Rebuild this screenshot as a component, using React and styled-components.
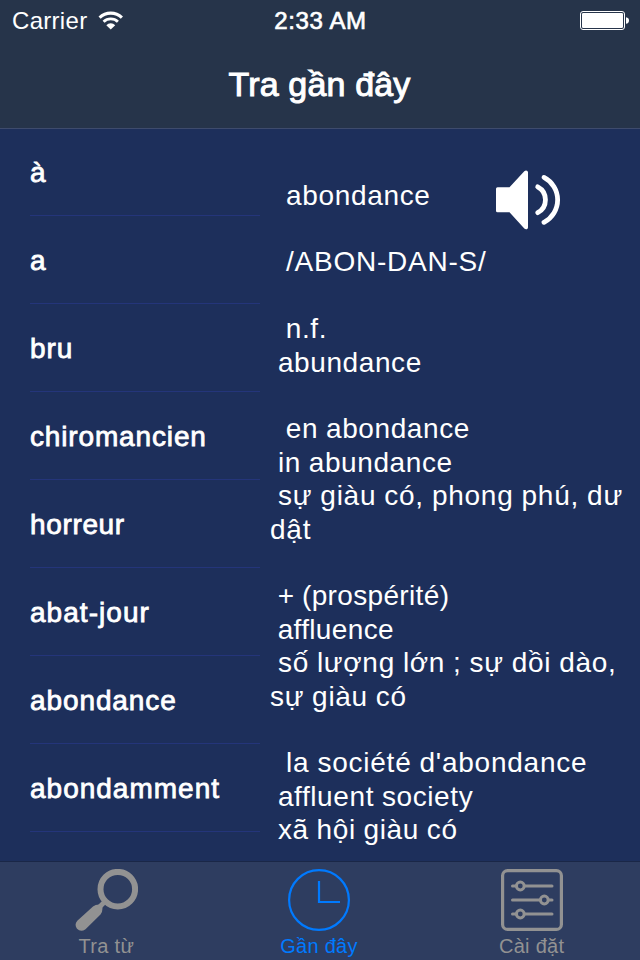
import { useState } from "react";
import styled, { createGlobalStyle } from "styled-components";

const GlobalStyle = createGlobalStyle`
  * {
    box-sizing: border-box;
  }
  body {
    margin: 0;
    font-family: "Liberation Sans", Arial, sans-serif;
    background: #1d2f5b;
    color: #fff;
  }
`;

const Screen = styled.div`
  width: 640px;
  height: 960px;
  display: flex;
  flex-direction: column;
  overflow: hidden;
  background: #1d2f5b;
`;

const Header = styled.header`
  height: 128px;
  flex: none;
  position: relative;
  background: #26344a;
  box-shadow: 0 1px 0 #3e4b6d;
`;

const StatusBar = styled.div`
  height: 40px;
  display: grid;
  grid-template-columns: 1fr auto 1fr;
  align-items: center;
  padding: 2px 11px 0 12px;
  font-size: 24px;
  line-height: 28px;
  letter-spacing: 0.3px;
`;

const Carrier = styled.div`
  display: flex;
  align-items: center;
  gap: 11px;

  svg {
    margin-top: -2px;
  }
`;

const Time = styled.div`
  letter-spacing: 0.6px;
  -webkit-text-stroke: 0.7px #fff;
`;

const Battery = styled.div`
  display: flex;
  justify-content: flex-end;
  margin-top: -2px;
`;

const Title = styled.h1`
  margin: 0;
  height: 88px;
  line-height: 88px;
  text-align: center;
  font-size: 34px;
  font-weight: 400;
  letter-spacing: 0.15px;
  text-indent: -1px;
  -webkit-text-stroke: 1px #fff;
`;

const Content = styled.main`
  flex: 1;
  min-height: 0;
  display: flex;
`;

const WordList = styled.ul`
  width: 260px;
  flex: none;
  margin: 0;
  padding: 0 0 0 30px;
  list-style: none;
`;

const Word = styled.li`
  height: 88px;
  border-bottom: 1px solid #24357a;
  font-size: 28px;
  line-height: 90px;
  letter-spacing: ${(props) => props.$spacing || "0.9px"};
  -webkit-text-stroke: 0.8px #fff;
  cursor: pointer;
`;

const Detail = styled.section`
  position: relative;
  flex: 1;
  padding: 50.65px 0 0 10px;
`;

const Line = styled.div`
  height: 33.4px;
  font-size: 28px;
  line-height: 33.4px;
  letter-spacing: ${(props) => props.$spacing || "0.6px"};
  word-spacing: -0.5px;
  white-space: pre;
`;

const SpeakButton = styled.button`
  position: absolute;
  top: 42px;
  left: 236px;
  padding: 0;
  border: 0;
  background: none;
  line-height: 0;
`;

const TabBar = styled.nav`
  height: 98px;
  flex: none;
  position: relative;
  display: grid;
  grid-template-columns: repeat(3, 1fr);
  padding-right: 2px;
  background: #2e3d60;
  box-shadow: 0 -1px 0 #1a2747;
`;

const Tab = styled.button`
  display: flex;
  flex-direction: column;
  align-items: center;
  padding: 7px 0 0;
  border: 0;
  background: none;
  font-family: inherit;
  font-size: 20px;
  line-height: 24px;
  letter-spacing: 0.3px;
  color: ${(props) => (props.$active ? "#007aff" : "#929292")};

  span {
    margin-top: 3px;
  }
`;

const words = [
  { text: "à" },
  { text: "a" },
  { text: "bru" },
  { text: "chiromancien", spacing: "0.85px" },
  { text: "horreur", spacing: "0.65px" },
  { text: "abat-jour", spacing: "1.05px" },
  { text: "abondance" },
  { text: "abondamment", spacing: "1px" },
];

const lines = [
  { text: "  abondance", spacing: "0.68px" },
  { text: "" },
  { text: "  /ABON-DAN-S/", spacing: "0.75px" },
  { text: "" },
  { text: "  n.f." },
  { text: " abundance" },
  { text: "" },
  { text: "  en abondance" },
  { text: " in abundance" },
  { text: " sự giàu có, phong phú, dư", spacing: "0.75px" },
  { text: "dật", spacing: "0.8px" },
  { text: "" },
  { text: " + (prospérité)", spacing: "0.35px" },
  { text: " affluence", spacing: "0.35px" },
  { text: " số lượng lớn ; sự dồi dào,", spacing: "0.7px" },
  { text: "sự giàu có", spacing: "0.7px" },
  { text: "" },
  { text: "  la société d'abondance", spacing: "0.76px" },
  { text: " affluent society" },
  { text: " xã hội giàu có" },
];

const WifiIcon = () => (
  <svg width="26" height="19" viewBox="0 0 26 19" fill="none" stroke="#fff">
    <path d="M1.600 6.600a16 16 0 0 1 22.300 0" strokeWidth="3.100" />
    <path d="M5.600 10.700a10.400 10.400 0 0 1 14.300 0" strokeWidth="2.900" />
    <path d="M12.750 18.600L8.300 14.200a6.300 6.300 0 0 1 8.900 0z" fill="#fff" stroke="none" />
  </svg>
);

const BatteryIcon = () => (
  <svg width="49" height="19" viewBox="0 0 49 19">
    <rect x="0.500" y="0.500" width="44" height="18" rx="2.500" fill="none" stroke="#fff" />
    <rect x="2" y="2" width="41" height="15" rx="1.200" fill="#fff" />
    <path d="M46 6.200c2 .3 3 1.500 3 3.300s-1 3-3 3.300z" fill="#fff" />
  </svg>
);

const SpeakerIcon = () => (
  <svg width="66" height="60" viewBox="0 0 66 60">
    <path
      d="M1.500 17.300H13.500L28.300 1.200C29.800-.3 32 .4 32 2.600V57.200C32 59.400 29.800 60 28.300 58.600L13.500 42.300H1.500Q0 42.300 0 40.800V18.800Q0 17.300 1.500 17.300z"
      fill="#fff"
    />
    <path
      d="M41.700 16.800A14.700 14.700 0 0 1 41.700 42.700M48 7.400A25.300 25.300 0 0 1 48 52.300"
      fill="none"
      stroke="#fff"
      strokeWidth="4.800"
      strokeLinecap="round"
    />
  </svg>
);

const SearchIcon = () => (
  <svg width="63" height="62" viewBox="0 0 63 62" fill="none" stroke="currentColor">
    <circle cx="42.800" cy="20.200" r="17.300" strokeWidth="6" />
    <path d="M30.500 32L24 38.500" strokeWidth="4.800" />
    <path
      d="M18 37.600Q20.500 35.300 25 35.500L27.300 37.600Q28 42.500 25.500 45.500L10.500 60.200Q5.800 63.500 2 59.800Q-1 55.500 2.300 51.800z"
      fill="currentColor"
      stroke="none"
    />
  </svg>
);

const ClockIcon = () => (
  <svg width="62" height="62" viewBox="0 0 62 62" fill="none" stroke="currentColor" strokeWidth="2.200">
    <circle cx="31" cy="31" r="29.900" />
    <path d="M31 12V33H52" />
  </svg>
);

const SettingsIcon = () => (
  <svg width="62" height="62" viewBox="0 0 62 62" fill="none" stroke="currentColor">
    <rect x="1.600" y="1.600" width="58.800" height="58.800" rx="5" strokeWidth="3.200" />
    <g strokeWidth="3" strokeLinecap="round">
      <path d="M11.500 17H15M24 17H51" />
      <path d="M11.500 31H38.500M47.500 31H51" />
      <path d="M11.500 45H15M24 45H51" />
      <circle cx="19.300" cy="17" r="3.900" />
      <circle cx="43.300" cy="31" r="3.900" />
      <circle cx="19.300" cy="45" r="3.900" />
    </g>
  </svg>
);

const tabs = [
  { id: "search", label: "Tra từ", icon: SearchIcon },
  { id: "recent", label: "Gần đây", icon: ClockIcon },
  { id: "settings", label: "Cài đặt", icon: SettingsIcon },
];

const App = () => {
  const [activeTab, setActiveTab] = useState("recent");

  return (
    <Screen>
      <GlobalStyle />
      <Header>
        <StatusBar>
          <Carrier>
            Carrier
            <WifiIcon />
          </Carrier>
          <Time>2:33 AM</Time>
          <Battery>
            <BatteryIcon />
          </Battery>
        </StatusBar>
        <Title>Tra gần đây</Title>
      </Header>
      <Content>
        <WordList>
          {words.map((word) => (
            <Word key={word.text} $spacing={word.spacing}>
              {word.text}
            </Word>
          ))}
        </WordList>
        <Detail>
          {lines.map((line, i) => (
            <Line key={i} $spacing={line.spacing}>
              {line.text}
            </Line>
          ))}
          <SpeakButton>
            <SpeakerIcon />
          </SpeakButton>
        </Detail>
      </Content>
      <TabBar>
        {tabs.map(({ id, label, icon: Icon }) => (
          <Tab key={id} $active={id === activeTab} onClick={() => setActiveTab(id)}>
            <Icon />
            <span>{label}</span>
          </Tab>
        ))}
      </TabBar>
    </Screen>
  );
};

export default App;
